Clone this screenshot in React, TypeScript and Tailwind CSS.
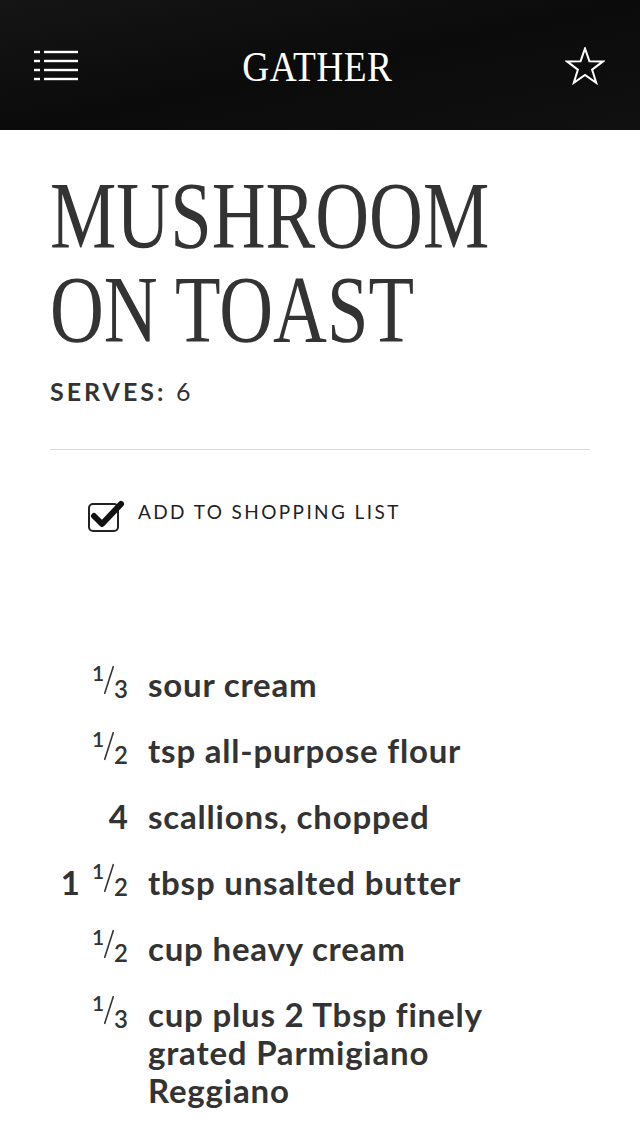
import React from "react";

type Ingredient = {
  whole?: string;
  num?: string;
  den?: string;
  text: string;
};

const ingredients: Ingredient[] = [
  { num: "1", den: "3", text: "sour cream" },
  { num: "1", den: "2", text: "tsp all-purpose flour" },
  { whole: "4", text: "scallions, chopped" },
  { whole: "1", num: "1", den: "2", text: "tbsp unsalted butter" },
  { num: "1", den: "2", text: "cup heavy cream" },
  { num: "1", den: "3", text: "cup plus 2 Tbsp finely grated Parmigiano Reggiano" },
];

function MenuIcon() {
  return (
    <svg width="44" height="32" viewBox="0 0 44 32" fill="none">
      {[2, 11, 20, 29].map((y) => (
        <g key={y}>
          <rect x="0" y={y - 1.2} width="6" height="2.4" fill="#fff" />
          <rect x="10" y={y - 1.2} width="34" height="2.4" fill="#fff" />
        </g>
      ))}
    </svg>
  );
}

function StarIcon() {
  return (
    <svg width="40" height="38" viewBox="0 0 40 38" fill="none">
      <path
        d="M20 1.5 L24.4 14.2 L38 14.4 L27.1 22.6 L31.2 35.8 L20 27.9 L8.8 35.8 L12.9 22.6 L2 14.4 L15.6 14.2 Z"
        stroke="#fff"
        strokeWidth="2"
        strokeLinejoin="miter"
      />
    </svg>
  );
}

function CheckIcon() {
  return (
    <svg width="40" height="34" viewBox="0 0 40 34" fill="none">
      <rect x="1" y="5" width="29" height="27" rx="4" stroke="#222" strokeWidth="2" />
      <path d="M6 17 L14 25 L33 5" stroke="#111" strokeWidth="6" strokeLinecap="round" strokeLinejoin="round" />
    </svg>
  );
}

// stacked fraction: small numerator up, slash, denominator down
function Fraction({ num, den }: { num: string; den: string }) {
  return (
    <span className="inline-flex items-start h-[38px]">
      <span className="text-[21px] leading-none font-semibold mt-[-3px]">{num}</span>
      <svg width="10" height="36" viewBox="0 0 10 36" className="mt-[-3px]">
        <line x1="9.5" y1="4" x2="0.5" y2="32" stroke="#333" strokeWidth="1.6" />
      </svg>
      <span className="text-[24px] leading-none font-semibold mt-[12px]">{den}</span>
    </span>
  );
}

export default function App() {
  return (
    <div className="min-h-[1136px] bg-white font-['Lato','Noto_Sans',sans-serif] text-[#333]">
      <header className="h-[130px] bg-gradient-to-br from-[#151515] via-[#0b0b0b] to-[#101010] flex items-center justify-between px-[34px] pt-[2px]">
        <MenuIcon />
        <div className="mr-[8px] font-['Liberation_Serif',serif] text-white text-[42px] leading-none origin-center scale-x-[0.89] tracking-[0.5px] pt-[1px]">
          GATHER
        </div>
        <div className="mr-[1px]">
          <StarIcon />
        </div>
      </header>

      <main className="px-[50px]">
        <h1 className="pt-[39px] font-['Liberation_Serif',serif] text-[95px] leading-[94px] font-normal text-[#333] origin-left scale-x-[0.785] whitespace-nowrap">
          <span className="block">MUSHROOM</span>
          <span className="block">ON TOAST</span>
        </h1>
        <div className="mt-[19px] text-[25px] leading-[30px] tracking-[3px]">
          <span className="font-bold">SERVES:</span> <span className="font-normal">6</span>
        </div>
        <div className="mt-[43px] h-px bg-[#d9d9d9]" />

        <div className="mt-[48px] ml-[38px] flex items-center gap-[10px]">
          <CheckIcon />
          <span className="mb-[8px] text-[19px] tracking-[2.4px] text-[#222] font-normal">ADD TO SHOPPING LIST</span>
        </div>

        <ul className="mt-[130px] flex flex-col gap-[28px]">
          {ingredients.map((ing, i) => (
            <li key={`${ing.text}-${i}`} className="flex items-start text-[33px] leading-[38px] font-bold tracking-[0.8px]">
              <div className="w-[78px] flex justify-end shrink-0 tracking-normal">
                {ing.whole && <span className={ing.num ? "mr-[12px]" : ""}>{ing.whole}</span>}
                {ing.num && ing.den && <Fraction num={ing.num} den={ing.den} />}
              </div>
              <div className="ml-[20px] max-w-[350px]">{ing.text}</div>
            </li>
          ))}
        </ul>
      </main>
    </div>
  );
}
